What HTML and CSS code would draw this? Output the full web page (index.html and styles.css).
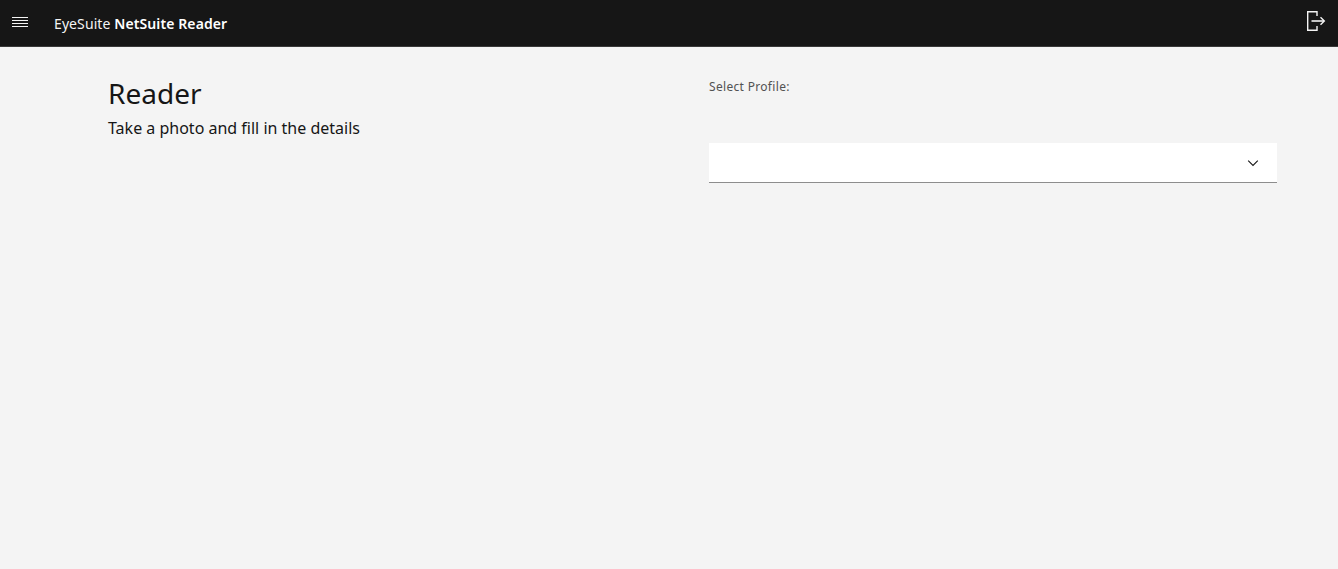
FILE: index.html
```html
<!DOCTYPE html>
<html lang="en">
<head>
<meta charset="utf-8">
<title>EyeSuite NetSuite Reader</title>
<link rel="stylesheet" href="styles.css">
</head>
<body>
<header class="topbar">
  <button class="menu-btn" aria-label="Menu">
    <svg width="20" height="20" viewBox="0 0 20 20" fill="none" stroke="#f4f4f4" stroke-width="1">
      <path d="M2 4.5h16M2 7.5h16M2 10.5h16M2 13.5h16"/>
    </svg>
  </button>
  <div class="brand">EyeSuite <strong>NetSuite Reader</strong></div>
  <button class="logout-btn" aria-label="Log out">
    <svg width="24" height="24" viewBox="0 0 24 24" fill="none" stroke="#f4f4f4" stroke-width="1.4">
      <path d="M13 7V2.7H3.7v18.6H13V17"/>
      <path d="M7.5 12h12.5" stroke-width="1.6"/>
      <path d="M16.5 8.2 20.3 12l-3.8 3.8"/>
    </svg>
  </button>
</header>
<main class="content">
  <section class="intro">
    <h1 class="title">Reader</h1>
    <p class="subtitle">Take a photo and fill in the details</p>
  </section>
  <section class="profile">
    <label class="field-label">Select Profile:</label>
    <div class="select">
      <svg width="16" height="16" viewBox="0 0 16 16" fill="none" stroke="#161616" stroke-width="1.1">
        <path d="M3.2 5.7 8 10.4l4.8-4.7"/>
      </svg>
    </div>
  </section>
</main>
</body>
</html>
```
FILE: styles.css
```css
* { box-sizing: border-box; }
html, body { margin: 0; height: 100%; }
body {
  background: #f4f4f4;
  color: #161616;
  font-family: "Noto Sans", "Open Sans", sans-serif;
}
.topbar {
  display: flex;
  align-items: center;
  height: 47px;
  background: #161616;
  border-bottom: 1px solid #393939;
  color: #f4f4f4;
}
.menu-btn, .logout-btn {
  display: flex;
  align-items: center;
  justify-content: center;
  padding: 0;
  background: none;
  border: 0;
}
.menu-btn { width: 40px; height: 46px; }
.brand {
  margin-left: 14px;
  font-size: 14px;
  letter-spacing: 0.1px;
  font-weight: 400;
}
.brand strong { font-weight: 600; color: #fff; }
.logout-btn { margin-left: auto; width: 24px; height: 24px; margin-right: 10px; margin-top: -4px; }
.content {
  display: grid;
  grid-template-columns: 601px 568px;
  padding: 32px 0 0 108px;
}
.title {
  margin: 0;
  font-size: 28px;
  line-height: 28px;
  font-weight: 400;
  padding-top: 0;
}
.subtitle {
  margin: 10px 0 0;
  font-size: 16px;
  line-height: 22px;
}
.field-label {
  display: block;
  font-size: 12px;
  line-height: 16px;
  letter-spacing: 0.32px;
  color: #525252;
}
.select {
  display: flex;
  align-items: center;
  justify-content: flex-end;
  height: 40px;
  margin-top: 48px;
  padding-right: 16px;
  background: #fff;
  border-bottom: 1px solid #8d8d8d;
}
```
